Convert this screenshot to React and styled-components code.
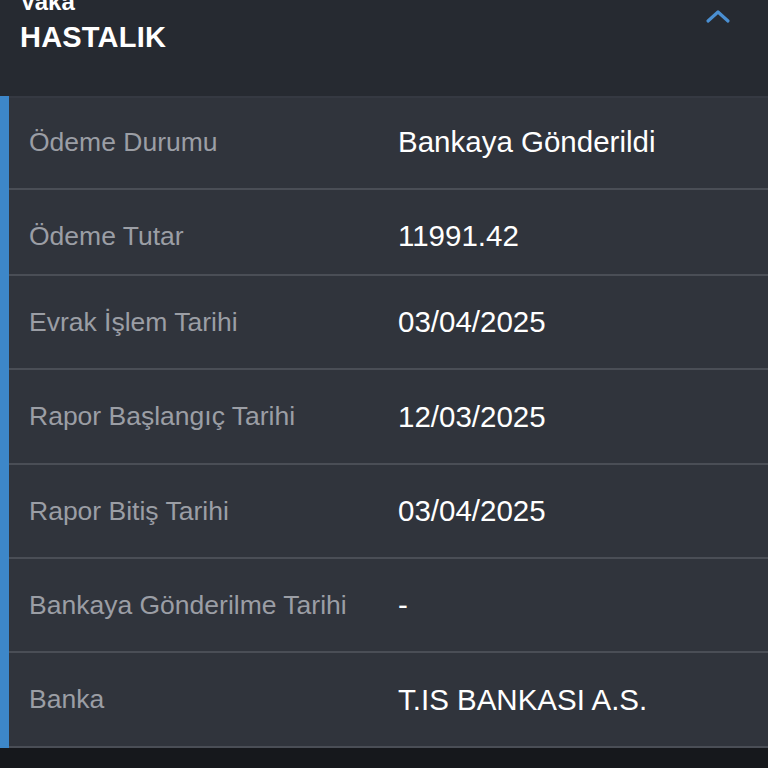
import React from 'react';
import styled, { createGlobalStyle } from 'styled-components';

const rows = [
  { label: 'Ödeme Durumu', value: 'Bankaya Gönderildi', h: 94 },
  { label: 'Ödeme Tutar', value: '11991.42', h: 86, shift: 8 },
  { label: 'Evrak İşlem Tarihi', value: '03/04/2025', h: 94 },
  { label: 'Rapor Başlangıç Tarihi', value: '12/03/2025', h: 95 },
  { label: 'Rapor Bitiş Tarihi', value: '03/04/2025', h: 94 },
  { label: 'Bankaya Gönderilme Tarihi', value: '-', h: 94 },
  { label: 'Banka', value: 'T.IS BANKASI A.S.', h: 95 },
];

const App = () => {
  return (
    <>
      <GlobalStyle />
      <Page>
        <Header>
          <Titles>
            <Kicker>Vaka</Kicker>
            <Title>HASTALIK</Title>
          </Titles>
          <Toggle aria-label="Kapat">
            <svg width="26" height="16" viewBox="0 0 26 16" fill="none">
              <path d="M3 13 L13 4 L23 13" stroke="#4a8fd2" strokeWidth="3.2" strokeLinecap="round" strokeLinejoin="round" />
            </svg>
          </Toggle>
        </Header>
        <Panel>
          {rows.map((r) => (
            <Row key={r.label} $h={r.h} $shift={r.shift || 0}>
              <Label>{r.label}</Label>
              <Value>{r.value}</Value>
            </Row>
          ))}
        </Panel>
      </Page>
    </>
  );
};

export default App;

// CSS

const GlobalStyle = createGlobalStyle`
  html, body {
    margin: 0;
    padding: 0;
    background: #16181c;
    font-family: "Liberation Sans", Arial, Helvetica, sans-serif;
  }
  * { box-sizing: border-box; }
`;

const Page = styled.div`
  width: 768px;
  height: 768px;
  overflow: hidden;
  background: #16181c;
  display: flex;
  flex-direction: column;
`;

const Header = styled.div`
  height: 96px;
  flex: none;
  background: #262a31;
  display: flex;
  justify-content: space-between;
  align-items: flex-start;
  padding: 0 37px 0 20px;
  overflow: hidden;
`;

const Titles = styled.div`
  display: flex;
  flex-direction: column;
  gap: 4px;
  margin-top: -12px;
`;

const Kicker = styled.div`
  color: #ffffff;
  font-size: 24px;
  line-height: 28px;
  font-weight: 700;
`;

const Title = styled.div`
  color: #ffffff;
  font-size: 29px;
  line-height: 34px;
  font-weight: 700;
  letter-spacing: 0.2px;
`;

const Toggle = styled.button`
  background: none;
  border: none;
  padding: 0;
  margin-top: 8px;
  display: flex;
  cursor: pointer;
`;

const Panel = styled.div`
  flex: none;
  background: #30343c;
  border-left: 9px solid #3d87c9;
  box-shadow: inset 0 2px 0 #353942;
`;

const Row = styled.div`
  display: grid;
  grid-template-columns: 369px 1fr;
  align-items: center;
  height: ${(p) => p.$h}px;
  padding: ${(p) => p.$shift}px 0 0 20px;
  border-bottom: 2px solid #4a4e56;
`;

const Label = styled.div`
  color: #9b9ea5;
  font-size: 26.5px;
  white-space: nowrap;
`;

const Value = styled.div`
  color: #ffffff;
  font-size: 29.5px;
  white-space: nowrap;
`;
